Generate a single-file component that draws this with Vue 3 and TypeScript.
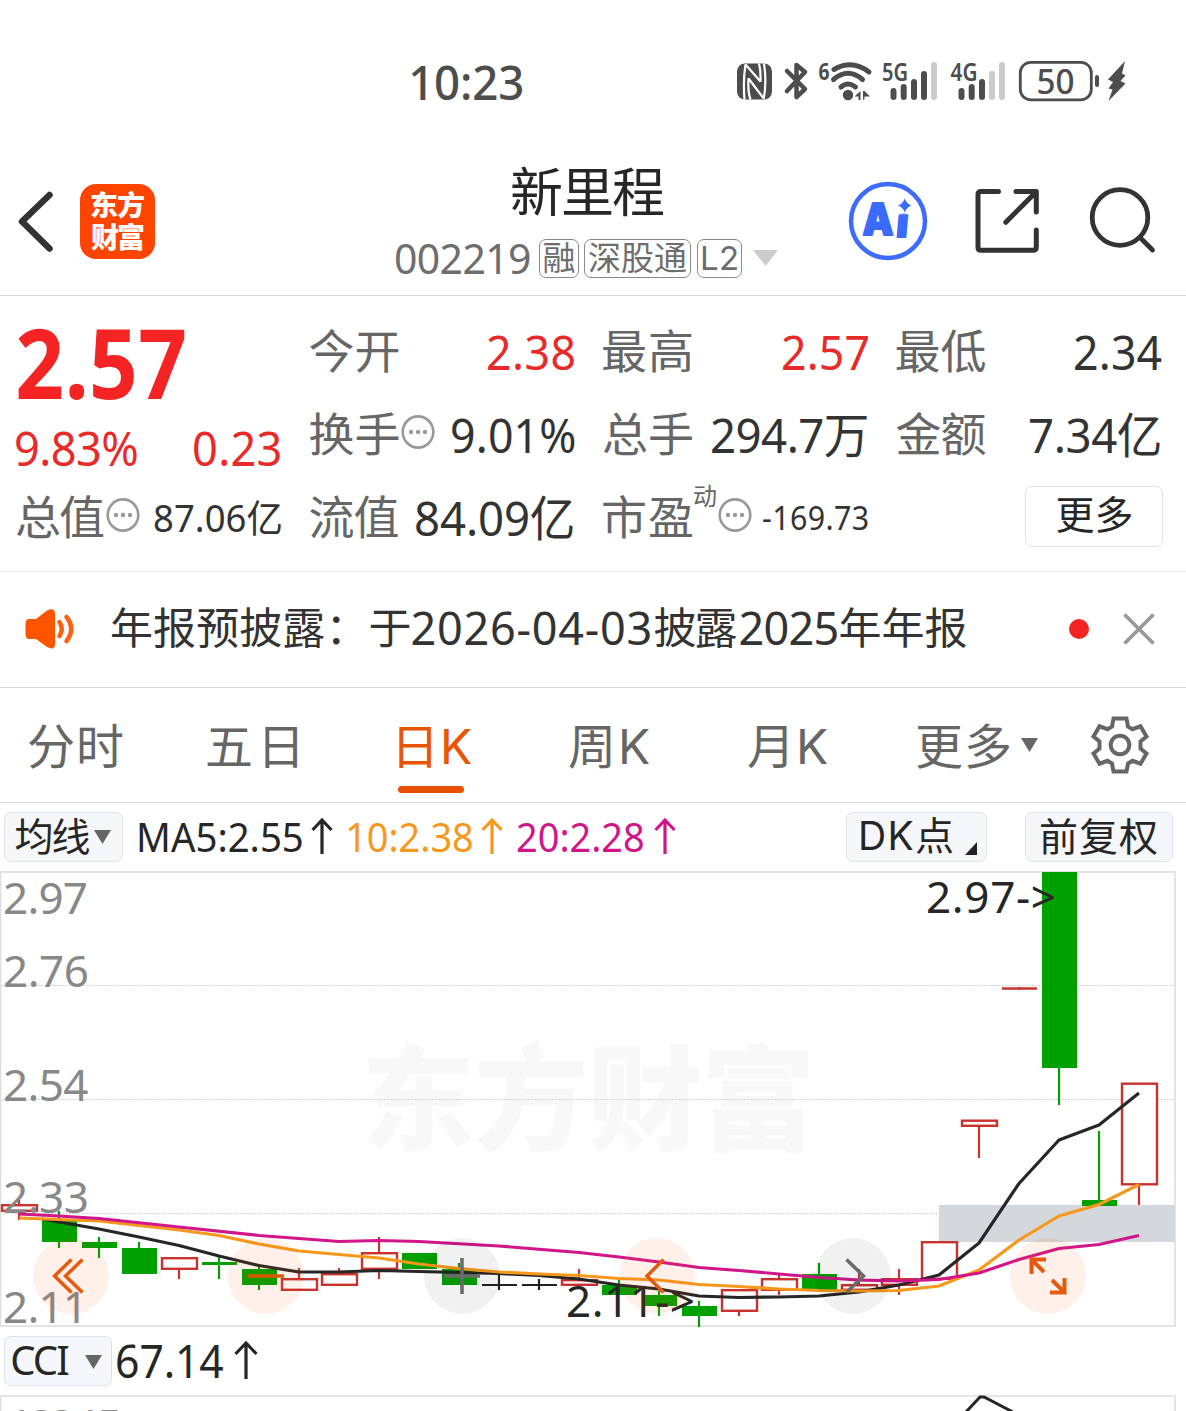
<script setup lang="ts">
import type { Directive } from 'vue'

// Sizes a one-line text so that its visible glyphs fill exactly the given width.
// A pair [width, scale] also condenses the glyphs horizontally.
const ctx = document.createElement('canvas').getContext('2d')!
const vInk: Directive<HTMLElement, number | number[]> = {
  mounted(el, { value }) {
    const [width, scale] = Array.isArray(value) ? value : [value, 1]
    const cs = getComputedStyle(el)
    const text = (el.textContent ?? '').trim()
    ctx.font = `${cs.fontWeight} ${cs.fontSize} ${cs.fontFamily}`
    const m = ctx.measureText(text)
    const ink = m.actualBoundingBoxLeft + m.actualBoundingBoxRight
    const count = [...text].length
    el.style.width = `${width}px`
    el.style.textIndent = `${m.actualBoundingBoxLeft}px`
    if (count > 1) el.style.letterSpacing = `${(width / scale - ink) / (count - 1)}px`
    if (scale !== 1) {
      el.style.transformOrigin = '0 50%'
      el.style.transform = `scaleX(${scale})`
    }
  },
}

interface Quote {
  label: string
  value: string
  w: number
  s?: number
  tone?: string
  info?: boolean
  end?: number
}
const quotes: Quote[] = [
  { label: '今开', value: '2.38', w: 86, tone: 'up', end: 1 },
  { label: '最高', value: '2.57', w: 85, tone: 'up', end: 1 },
  { label: '最低', value: '2.34', w: 87 },
  { label: '换手', value: '9.01%', w: 123, info: true },
  { label: '总手', value: '294.7万', w: 155, s: 0.96, end: 2 },
  { label: '金额', value: '7.34亿', w: 130, s: 0.96, end: 2 },
]

const message = [
  { t: '年报预披露：于', w: 297.5, gap: 0 },
  { t: '2026-04-03', w: 238, gap: 3, num: true },
  { t: '披露', w: 82, gap: 4 },
  { t: '2025', w: 97, gap: 4, num: true },
  { t: '年年报', w: 126, gap: 3 },
]

interface Tab { name: string; w: number; lead: number; active?: boolean }
const tabs: Tab[] = [
  { name: '分时', w: 94, lead: 29 },
  { name: '五日', w: 90, lead: 84 },
  { name: '日K', w: 72, lead: 102, active: true },
  { name: '周K', w: 80, lead: 98 },
  { name: '月K', w: 79, lead: 99 },
  { name: '更多', w: 93, lead: 90 },
]

type Kind = 'up' | 'down' | 'flat'
// [kind, body top, body bottom, wick top, wick bottom]
const candles: [Kind, number, number, number, number][] = [
  ['up', 1204, 1212, 1200, 1220],
  ['down', 1220, 1242, 1211, 1248],
  ['down', 1242, 1248, 1237, 1258],
  ['down', 1248, 1274, 1242, 1274],
  ['up', 1257, 1270, 1257, 1279],
  ['down', 1262, 1265, 1257, 1279],
  ['down', 1269, 1285, 1264, 1290],
  ['up', 1278, 1291, 1268, 1291],
  ['up', 1273, 1286, 1268, 1286],
  ['up', 1252, 1270, 1237, 1279],
  ['down', 1253, 1269, 1253, 1269],
  ['down', 1269, 1285, 1263, 1285],
  ['flat', 1284, 1286, 1274, 1290],
  ['flat', 1284, 1286, 1279, 1290],
  ['up', 1279, 1286, 1269, 1286],
  ['down', 1285, 1295, 1280, 1295],
  ['down', 1295, 1306, 1291, 1316],
  ['down', 1306, 1316, 1301, 1327],
  ['up', 1289, 1312, 1289, 1316],
  ['up', 1278, 1291, 1274, 1295],
  ['down', 1274, 1290, 1263, 1290],
  ['up', 1284, 1291, 1269, 1291],
  ['up', 1278, 1286, 1269, 1295],
  ['up', 1241, 1280, 1241, 1280],
  ['up', 1119.5, 1127, 1119.5, 1158],
  ['up', 987.2, 989.8, 988, 989],
  ['down', 872, 1068, 872, 1105],
  ['down', 1200, 1206, 1131, 1206],
  ['up', 1082.5, 1185.5, 1082.5, 1205],
]
const cx = (i: number) => 19 + 40 * i

const ma5 = '42,1219 59,1222 99,1229 139,1237 179,1245.5 219,1256 259,1265.5 299,1272 339,1272 379,1270.5 419,1271.5 459,1272.5 499,1273.5 539,1275.5 579,1279 619,1285 659,1289 699,1296 739,1297.5 779,1297 819,1296 859,1292 899,1285 939,1275 979,1243 1019,1183.5 1059,1140 1099,1125 1139,1093'
const ma10 = '19,1218 99,1221 179,1230 219,1235.5 259,1244 299,1251 339,1254.5 379,1258 419,1264 459,1268.5 499,1272 539,1274 579,1275.5 619,1278.5 659,1280 699,1284.5 739,1286.5 779,1289 819,1290.5 859,1291 899,1290.5 939,1286 979,1270 1019,1240 1059,1216 1099,1204.5 1139,1184.5'
const ma20 = '19,1214 59,1216 99,1218.5 179,1227 259,1235.5 339,1241.5 379,1240.5 419,1241.5 499,1246 579,1252.5 619,1257 659,1262 699,1267.5 739,1270.5 779,1274 819,1277.5 859,1280 899,1281 939,1279.5 979,1273 1019,1259.5 1059,1248.5 1099,1244.5 1139,1235.5'

const axis = [
  { t: '2.97', y: 914, w: 85 },
  { t: '2.76', y: 987, w: 86 },
  { t: '2.54', y: 1101, w: 85.5 },
  { t: '2.33', y: 1213, w: 86 },
  { t: '2.11', y: 1323, w: 85 },
]
const buttons = [
  { x: 71, warm: true }, { x: 266, warm: true }, { x: 462, warm: false },
  { x: 657, warm: true }, { x: 853, warm: false }, { x: 1048, warm: true },
]
</script>

<template>
  <div class="app">
    <div class="status">
      <span class="clock" v-ink="[111, 0.95]">10:23</span>
      <svg class="nfc" width="35" height="37" viewBox="0 0 35 37">
        <rect width="35" height="36" y=".5" rx="8" fill="#4d4d4d" />
        <path d="M7.500 36.500C6.500 25 6.800 12 8.500 1.500L23.500 18.500C23.800 11 23.500 6 22 .5M27 .5C28.800 12 28.500 26 26.800 35.500L11.500 15.500C11 24 11.500 31 13.500 36.500" stroke="#fff" stroke-width="2.200" fill="none" stroke-linejoin="bevel" />
      </svg>
      <svg class="bt" width="25" height="40" viewBox="0 0 25 40">
        <path d="M3 10L21 28L12.500 36V4L21 11L3 30" fill="none" stroke="#4d4d4d" stroke-width="4.500" stroke-linecap="round" stroke-linejoin="round" />
      </svg>
      <svg class="wifi" width="54" height="42" viewBox="818 60 54 42">
        <text x="818.500" y="80" font-size="24" font-weight="700" textLength="11" lengthAdjust="spacingAndGlyphs">6</text>
        <g fill="none" stroke="#4d4d4d" stroke-width="5" stroke-linecap="round">
          <path d="M834 69.500Q852 59 869 72" />
          <path d="M833.500 79.500Q848 67 862.500 79.500" />
          <path d="M841 87Q848 81 855.500 87" />
        </g>
        <circle cx="848" cy="95" r="5.200" />
        <path d="M854.500 96.500L860.500 91V100H858.500V96.500ZM863 91V100L864.500 99V96.500H870L864.500 91Z" />
      </svg>
      <svg class="sig" width="56" height="42" viewBox="882 60 56 42">
        <text x="882" y="81" font-size="26" font-weight="600" textLength="26" lengthAdjust="spacingAndGlyphs">5G</text>
        <g stroke="#4d4d4d" stroke-width="6" stroke-linecap="round">
          <path d="M893.500 91V97M903.700 87V97M914 82V97M924 74V97" />
          <path d="M934 65V97" stroke="#cbcbcb" />
        </g>
      </svg>
      <svg class="sig4" width="56" height="42" viewBox="950 60 56 42">
        <text x="950.500" y="81" font-size="26" font-weight="600" textLength="27" lengthAdjust="spacingAndGlyphs">4G</text>
        <g stroke="#4d4d4d" stroke-width="6" stroke-linecap="round">
          <path d="M961.500 91V97M971.700 87V97M982 82V97" />
          <path d="M992 74V97M1002 65V97" stroke="#cbcbcb" />
        </g>
      </svg>
      <svg class="batt" width="110" height="44" viewBox="1018 59 110 44">
        <rect x="1020.300" y="62.300" width="71" height="37.500" rx="10.500" fill="none" stroke="#4d4d4d" stroke-width="2.800" />
        <text x="1036.500" y="94" font-size="35" font-weight="500" textLength="38" lengthAdjust="spacingAndGlyphs">50</text>
        <rect x="1095" y="75" width="4" height="12" rx="2" />
        <path d="M1125 61L1108 79.500L1113 82L1108.500 88.500L1112.500 89.500L1108.500 101L1125.500 83.500L1120.500 81L1125.500 75.500L1122 73.500Z" />
      </svg>
    </div>

    <header class="head">
      <svg width="40" height="64" viewBox="15 190 40 64"><path d="M49.500 195L22 221.500L49.500 248.500" fill="none" stroke="#333" stroke-width="6.500" stroke-linecap="round" stroke-linejoin="round" /></svg>
      <div class="logo"><span v-ink="53">东方</span><span v-ink="53">财富</span></div>
      <div class="title">
        <span class="name" v-ink="152">新里程</span>
        <div class="sub">
          <span class="code" v-ink="134">002219</span>
          <span class="tag t1"><span v-ink="31">融</span></span>
          <span class="tag t2"><span v-ink="97">深股通</span></span>
          <span class="tag t3"><span v-ink="35">L2</span></span>
          <svg class="drop" width="25" height="16"><path d="M0 0H25L12.500 16Z" fill="#ccc" /></svg>
        </div>
      </div>
      <svg class="ai" width="80" height="80" viewBox="848 181 80 80">
        <circle cx="888" cy="221" r="37" fill="none" stroke="#3d6bfb" stroke-width="4.500" />
        <g fill="#3b6bfd" stroke="#3b6bfd" stroke-width="1.800" stroke-linejoin="round" font-weight="900" font-family="Inter, sans-serif">
          <text x="862.500" y="234.500" font-size="44" textLength="31" lengthAdjust="spacingAndGlyphs">A</text>
          <text transform="translate(895.500 237.200) skewX(-5)" font-size="40">i</text>
        </g>
        <path d="M893.500 199L900 196H909L912 199V213.500H893.500Z" fill="#fff" />
        <path d="M904.700 198.500Q906.500 203.700 911.500 205.500Q906.500 207.300 904.700 212.500Q903 207.300 898 205.500Q903 203.700 904.700 198.500Z" fill="#3b6bfd" />
      </svg>
      <svg class="share" width="66" height="66" viewBox="974 188 66 66">
        <path d="M998.500 191.500H981Q978 191.500 978 194.500V247.500Q978 250.300 981 250.300H1033Q1036.300 250.300 1036.300 247V230M1016 191.500H1036.300V212M1036 192L1005.800 222.300" fill="none" stroke="#333" stroke-width="5" stroke-linecap="round" stroke-linejoin="round" />
      </svg>
      <svg class="search" width="68" height="68" viewBox="1088 186 68 68">
        <circle cx="1120" cy="217.500" r="27.800" fill="none" stroke="#333" stroke-width="4.800" />
        <path d="M1140.500 238L1152.500 250" stroke="#333" stroke-width="4.800" stroke-linecap="round" />
      </svg>
    </header>

    <section class="quote">
      <div class="price">
        <span class="last" v-ink="[167, 0.88]">2.57</span>
        <div class="chg"><span v-ink="[121, 0.94]">9.83%</span><span v-ink="[86, 0.94]">0.23</span></div>
      </div>
      <div v-for="q in quotes" :key="q.label" class="cell">
        <span class="lbl" v-ink="89">{{ q.label }}</span>
        <svg v-if="q.info" class="info" width="34" height="36" viewBox="-17 -18 34 36"><ellipse rx="15.300" ry="15.600" fill="none" stroke="#999" stroke-width="2.600" /><circle cx="-7" r="2.200" /><circle r="2.200" /><circle cx="7" r="2.200" /></svg>
        <span class="val" :class="[q.tone, 'e' + (q.end ?? 0)]" v-ink="[q.w, q.s ?? 0.94]">{{ q.value }}</span>
      </div>
      <div class="cell">
        <span class="lbl" v-ink="88">总值</span>
        <svg class="info" width="34" height="36" viewBox="-17 -18 34 36"><ellipse rx="15.300" ry="15.600" fill="none" stroke="#999" stroke-width="2.600" /><circle cx="-7" r="2.200" /><circle r="2.200" /><circle cx="7" r="2.200" /></svg>
        <span class="val mid" v-ink="[127, 0.96]">87.06亿</span>
      </div>
      <div class="cell">
        <span class="lbl" v-ink="89">流值</span>
        <span class="val e2" v-ink="[157, 0.96]">84.09亿</span>
      </div>
      <div class="cell">
        <span class="lbl" v-ink="89">市盈</span>
        <span class="sup" v-ink="22">动</span>
        <svg class="info" width="34" height="36" viewBox="-17 -18 34 36"><ellipse rx="15.300" ry="15.600" fill="none" stroke="#999" stroke-width="2.600" /><circle cx="-7" r="2.200" /><circle r="2.200" /><circle cx="7" r="2.200" /></svg>
        <span class="val small" v-ink="[105, 0.95]">-169.73</span>
      </div>
      <div class="cell">
        <button class="more"><span v-ink="75">更多</span></button>
      </div>
    </section>

    <section class="notice">
      <svg class="horn" width="52" height="44" viewBox="24 607 52 44">
        <path d="M29 619H36L47 610.500Q55 607 55 614V644Q55 651 47 647L36 639H29Q25.500 639 25.500 634V624Q25.500 619 29 619Z" fill="#ff5500" />
        <path d="M59.500 622Q64 629 59.500 636M66.500 617Q76 629 66.500 641" fill="none" stroke="#ff5f10" stroke-width="4.500" stroke-linecap="round" />
      </svg>
      <p class="msg"><span v-for="s in message" :key="s.t" v-ink="s.w" :class="{ num: s.num }" :style="{ marginLeft: s.gap + 'px' }">{{ s.t }}</span></p>
      <i class="dot"></i>
      <svg class="close" width="34" height="34"><path d="M2.500 2.500L31.500 31.500M31.500 2.500L2.500 31.500" stroke="#999" stroke-width="3.800" /></svg>
    </section>

    <nav class="tabs">
      <span v-for="t in tabs" :key="t.name" class="tab" :class="{ on: t.active }" :style="{ marginLeft: t.lead + 'px' }">
        <span v-ink="t.w">{{ t.name }}</span>
      </span>
      <svg class="caret" width="17" height="14"><path d="M0 0H17L8.500 14Z" fill="#666" /></svg>
      <svg class="gear" width="60" height="60" viewBox="-30 -30 60 60">
        <path d="M-6.500 -26.500H6.500L8 -18.500L12.500 -15.800L20.500 -18.700L26.500 -8.500L20.500 -3.500V3.500L26.500 8.500L20.500 18.700L12.500 15.800L8 18.500L6.500 26.500H-6.500L-8 18.500L-12.500 15.800L-20.500 18.700L-26.500 8.500L-20.500 3.500V-3.500L-26.500 -8.500L-20.500 -18.700L-12.500 -15.800L-8 -18.500Z" fill="none" stroke="#666" stroke-width="4" />
        <circle r="9.300" fill="none" stroke="#666" stroke-width="4" />
      </svg>
    </nav>

    <div class="ma">
      <button class="chip c1"><span v-ink="74">均线</span><svg width="17" height="14"><path d="M0 0H17L8.500 14Z" fill="#666" /></svg></button>
      <span class="m m5"><span v-ink="[163, 0.96]">MA5:2.55</span><svg width="22" height="36"><path d="M11 36V2M1.500 12L11 2L20.500 12" /></svg></span>
      <span class="m m10"><span v-ink="[124, 0.95]">10:2.38</span><svg width="22" height="36"><path d="M11 36V2M1.500 12L11 2L20.500 12" /></svg></span>
      <span class="m m20"><span v-ink="[126, 0.95]">20:2.28</span><svg width="22" height="36"><path d="M11 36V2M1.500 12L11 2L20.500 12" /></svg></span>
      <button class="chip c2"><span v-ink="92">DK点</span><svg width="12" height="13"><path d="M12 0V13H0Z" fill="#222" /></svg></button>
      <button class="chip c3"><span v-ink="116">前复权</span></button>
    </div>

    <svg class="chart" width="1186" height="457" viewBox="0 871 1186 457">
      <text x="361" y="1141" class="mark" font-size="114" textLength="454">东方财富</text>
      <path d="M0 985.500H1175M0 1099.500H1175M0 1213.500H1175" stroke="#c8c8c8" stroke-dasharray="1.500 1.500" />
      <rect x=".5" y="872" width="1174.500" height="454" fill="none" stroke="#dedede" stroke-width="1.600" />
      <rect x="939" y="1205" width="236" height="37" fill="#d4d7dc" />
      <g v-for="(c, i) in candles" :key="i">
        <template v-if="c[0] === 'up'">
          <path :d="`M${cx(i)} ${c[3]}V${c[1]}M${cx(i)} ${c[2]}V${c[4]}`" stroke="#c8322f" stroke-width="2.200" />
          <path v-if="c[2] - c[1] < 4" :d="`M${cx(i) - 17} 988.500H${cx(i) + 18}`" stroke="#c8322f" stroke-width="2.400" />
          <rect v-else :x="cx(i) - 17" :y="c[1] + 1.2" width="35" :height="c[2] - c[1] - 2.4" fill="#fff" stroke="#c8322f" stroke-width="2.400" />
        </template>
        <template v-else>
          <rect :x="cx(i) - 17" :y="c[1]" width="35" :height="c[2] - c[1]" :fill="c[0] === 'down' ? '#00a000' : '#222'" />
          <path :d="`M${cx(i)} ${c[3]}V${c[4]}`" :stroke="c[0] === 'down' ? '#00a000' : '#222'" stroke-width="2.200" />
        </template>
      </g>
      <text v-for="a in axis" :key="a.t" :x="3" :y="a.y" class="ax" :textLength="a.w">{{ a.t }}</text>
      <g fill="none" stroke-width="3.200" stroke-linejoin="round">
        <polyline :points="ma5" stroke="#262626" />
        <polyline :points="ma10" stroke="#f7981d" />
        <polyline :points="ma20" stroke="#d1168a" />
      </g>
      <text x="926" y="912.500" class="peak" textLength="130">2.97-&gt;</text>
      <text x="566" y="1317" class="peak" textLength="129">2.11-&gt;</text>
      <circle v-for="b in buttons" :key="b.x" :cx="b.x" cy="1276" r="38" :fill="b.warm ? 'rgba(255,90,10,.09)' : 'rgba(0,0,0,.055)'" />
      <g fill="none" stroke="#e6590f" stroke-width="3.500">
        <path d="M71.500 1259.500L54.500 1276L71.500 1292.500M82.500 1259.500L65.500 1276L82.500 1292.500" />
        <path d="M248 1276H284" stroke="#d95a00" />
        <path d="M663.500 1259.500L647 1276L663.500 1292.500" />
        <path d="M1046 1259.500H1031.500V1274M1032 1260L1044 1272M1050 1292.500H1064.500V1278M1064 1292L1052 1280" stroke-width="4" />
      </g>
      <g fill="none" stroke="#6a6a6a" stroke-width="3.500">
        <path d="M462 1258V1294M444 1276H480" />
        <path d="M846.500 1259.500L863.500 1276L846.500 1292.500" />
      </g>
    </svg>

    <div class="cci">
      <button class="chip c4"><span v-ink="56">CCI</span><svg width="17" height="14"><path d="M0 0H17L8.500 14Z" fill="#666" /></svg></button>
      <span class="cv" v-ink="[106, 0.95]">67.14</span>
      <svg class="up-arrow" width="24" height="38"><path d="M12 38V2M1.500 13L12 2L22.500 13" /></svg>
    </div>

    <svg class="chart foot" width="1186" height="16" viewBox="0 1395 1186 16">
      <path d="M.5 1411V1396H1175V1411" fill="none" stroke="#dedede" stroke-width="1.600" />
      <text x="8" y="1440.500" class="ax" textLength="114">188.15</text>
      <polyline points="966,1412 980,1397 984,1397 1013,1412" fill="none" stroke="#262626" stroke-width="3" />
    </svg>
  </div>
</template>

<style>
body { margin: 0; background: #fff; }
</style>

<style scoped>
.app { width: 1186px; height: 1411px; overflow: hidden; background: #fff; font-family: "Noto Sans", "Noto Sans CJK SC", sans-serif; color: #333; }
.app span { white-space: nowrap; flex: none; }
.app svg { flex: none; display: block; overflow: visible; }
button { font-family: inherit; padding: 0; margin: 0; box-sizing: border-box; color: #262626; }

.status { height: 160px; display: flex; align-items: flex-start; fill: #4d4d4d; color: #4d4d4d; }
.clock { margin: 51px 0 0 411px; font-size: 48px; line-height: 62px; font-weight: 500; }
.nfc { margin: 63px 0 0 215px; }
.bt { margin: 61px 0 0 12px; }
.wifi { margin: 60px 0 0 9px; }
.sig { margin: 60px 0 0 10px; }
.sig4 { margin: 60px 0 0 12px; }
.batt { margin: 59px 0 0 12px; }

.head { height: 136px; box-sizing: border-box; border-bottom: 1px solid #d9d9d9; display: flex; align-items: flex-start; padding-left: 15px; }
.head > svg:first-child { margin-top: 30px; }
.logo { margin: 24px 0 0 25px; width: 75px; height: 75px; border-radius: 16px; background: #ff4400; display: flex; flex-direction: column; align-items: center; justify-content: center; color: #fff; font-size: 28px; font-weight: 900; line-height: 32px; box-sizing: border-box; padding-bottom: 2px; }
.title { margin-left: 240px; width: 384px; }
.name { display: block; margin: 0 0 0 117px; font-size: 53px; line-height: 64px; color: #262626; }
.sub { display: flex; align-items: center; height: 40px; margin-top: 14px; margin-left: 1px; }
.code { font-size: 41px; line-height: 40px; color: #6e6e6e; }
.tag { box-sizing: border-box; height: 39px; border: 1.500px solid #8a8a8a; border-radius: 7px; display: flex; justify-content: center; font-size: 33px; line-height: 35px; color: #6e6e6e; }
.t1 { width: 40px; margin-left: 9px; }
.t2 { width: 107px; margin-left: 5px; }
.t3 { width: 45px; margin-left: 6px; font-family: Inter, sans-serif; line-height: 37px; }
.drop { margin-left: 11px; }
.ai { margin: 21px 0 0 69px; }
.share { margin: 28px 0 0 46px; }
.search { margin: 26px 0 0 48px; }

.quote { height: 276px; box-sizing: border-box; border-bottom: 1px solid #ececec; padding: 14px 24px 0 16px; display: grid; grid-template-columns: repeat(4, 265.500px); column-gap: 28px; grid-template-rows: 83px 83px 83px; }
.price { grid-row: 1 / 3; color: #f42424; }
.last { display: block; margin: 1px 0 0 2px; font-size: 97px; font-weight: 700; line-height: 100px; }
.chg { display: flex; justify-content: space-between; font-size: 48px; line-height: 60px; margin: 7px 2px 0 0; color: #e82a2a; }
.cell { display: flex; align-items: center; line-height: 76px; height: 84px; }
.lbl { font-size: 46px; color: #666; margin-top: -5px; }
.info { margin: -7px 0 0 2px; fill: #999; }
.val { margin: 0 0 0 auto; font-size: 47.500px; }
.up { color: #e82a2a; }
.e1 { margin-right: 1px; }
.e2 { margin-right: 2px; }
.mid { font-size: 38px; margin: -3px 1px 0 auto; }
.small { font-size: 32px; margin: 0 1px 0 auto; }
.sup { font-size: 24px; line-height: 30px; color: #666; margin: -44px 0 0 2px; }
.more { margin: -3px -1px 0 auto; width: 138px; height: 61px; background: #fff; border: 1.500px solid #e2e2e2; border-radius: 7px; display: flex; justify-content: center; font-size: 39px; line-height: 54px; }

.notice { height: 116px; box-sizing: border-box; border-bottom: 1px solid #d9d9d9; display: flex; align-items: center; padding: 0 0 2px 24px; }
.msg { margin: -2px 0 0 36px; display: flex; font-size: 43px; line-height: 60px; }
.num { font-size: 45px; }
.dot { width: 20px; height: 20px; border-radius: 50%; background: #f42424; margin-left: 102px; }
.close { margin-left: 33px; }

.tabs { height: 115px; box-sizing: border-box; border-bottom: 1px solid #d9d9d9; display: flex; align-items: flex-start; color: #666; font-size: 48px; line-height: 72px; font-family: Inter, "Noto Sans CJK SC", sans-serif; }
.tab { display: flex; flex-direction: column; padding-top: 23px; }
.on { color: #ea5504; }
.on::after { content: ''; width: 66px; height: 7px; border-radius: 4px; background: #e65000; margin: 3px 0 0 -1px; }
.caret { margin: 50px 0 0 11px; }
.gear { margin: 27px 0 0 52px; }

.ma { height: 68px; display: flex; align-items: flex-start; padding: 9px 0 0 4px; box-sizing: border-box; }
.chip { height: 50px; background: #f6f7fa; border: 1.500px solid #dfe2e6; border-radius: 7px; display: flex; line-height: 45px; font-size: 39px; padding-left: 10px; }
.c1 { width: 119px; }
.c1 svg { margin: 17px 0 0 5px; }
.m { display: flex; font-size: 40px; line-height: 50px; }
.m svg, .up-arrow { fill: none; stroke: currentColor; stroke-width: 3.200px; }
.m svg { margin: 6px 0 0 9px; }
.m5 { margin-left: 16px; color: #262626; }
.m10 { margin-left: 15px; color: #f7981d; }
.m20 { margin-left: 14px; color: #d1168a; }
.m20 svg { margin-left: 11px; }
.c2 { width: 141px; margin-left: 170px; padding-left: 14px; font-family: Inter, "Noto Sans CJK SC", sans-serif; }
.c2 svg { margin: 29px 0 0 12px; }
.c3 { width: 148px; margin-left: 38px; padding-left: 15px; }

.chart { font-family: "Noto Sans", "Noto Sans CJK SC", sans-serif; }
.app .foot { overflow: hidden; }
.mark { font-weight: 900; fill: #f8f8f8; font-family: "Noto Sans CJK SC", sans-serif; }
.ax { font-size: 44px; fill: #888; }
.peak { font-size: 44px; fill: #262626; }

.cci { height: 67px; display: flex; align-items: flex-start; padding: 8px 0 0 4px; box-sizing: border-box; color: #262626; }
.c4 { width: 108px; font-size: 40px; padding-left: 7px; line-height: 46px; }
.c4 svg { margin: 18px 0 0 17px; }
.cv { margin-left: 5px; font-size: 45px; line-height: 50px; }
.up-arrow { margin: 5px 0 0 11px; }
</style>
